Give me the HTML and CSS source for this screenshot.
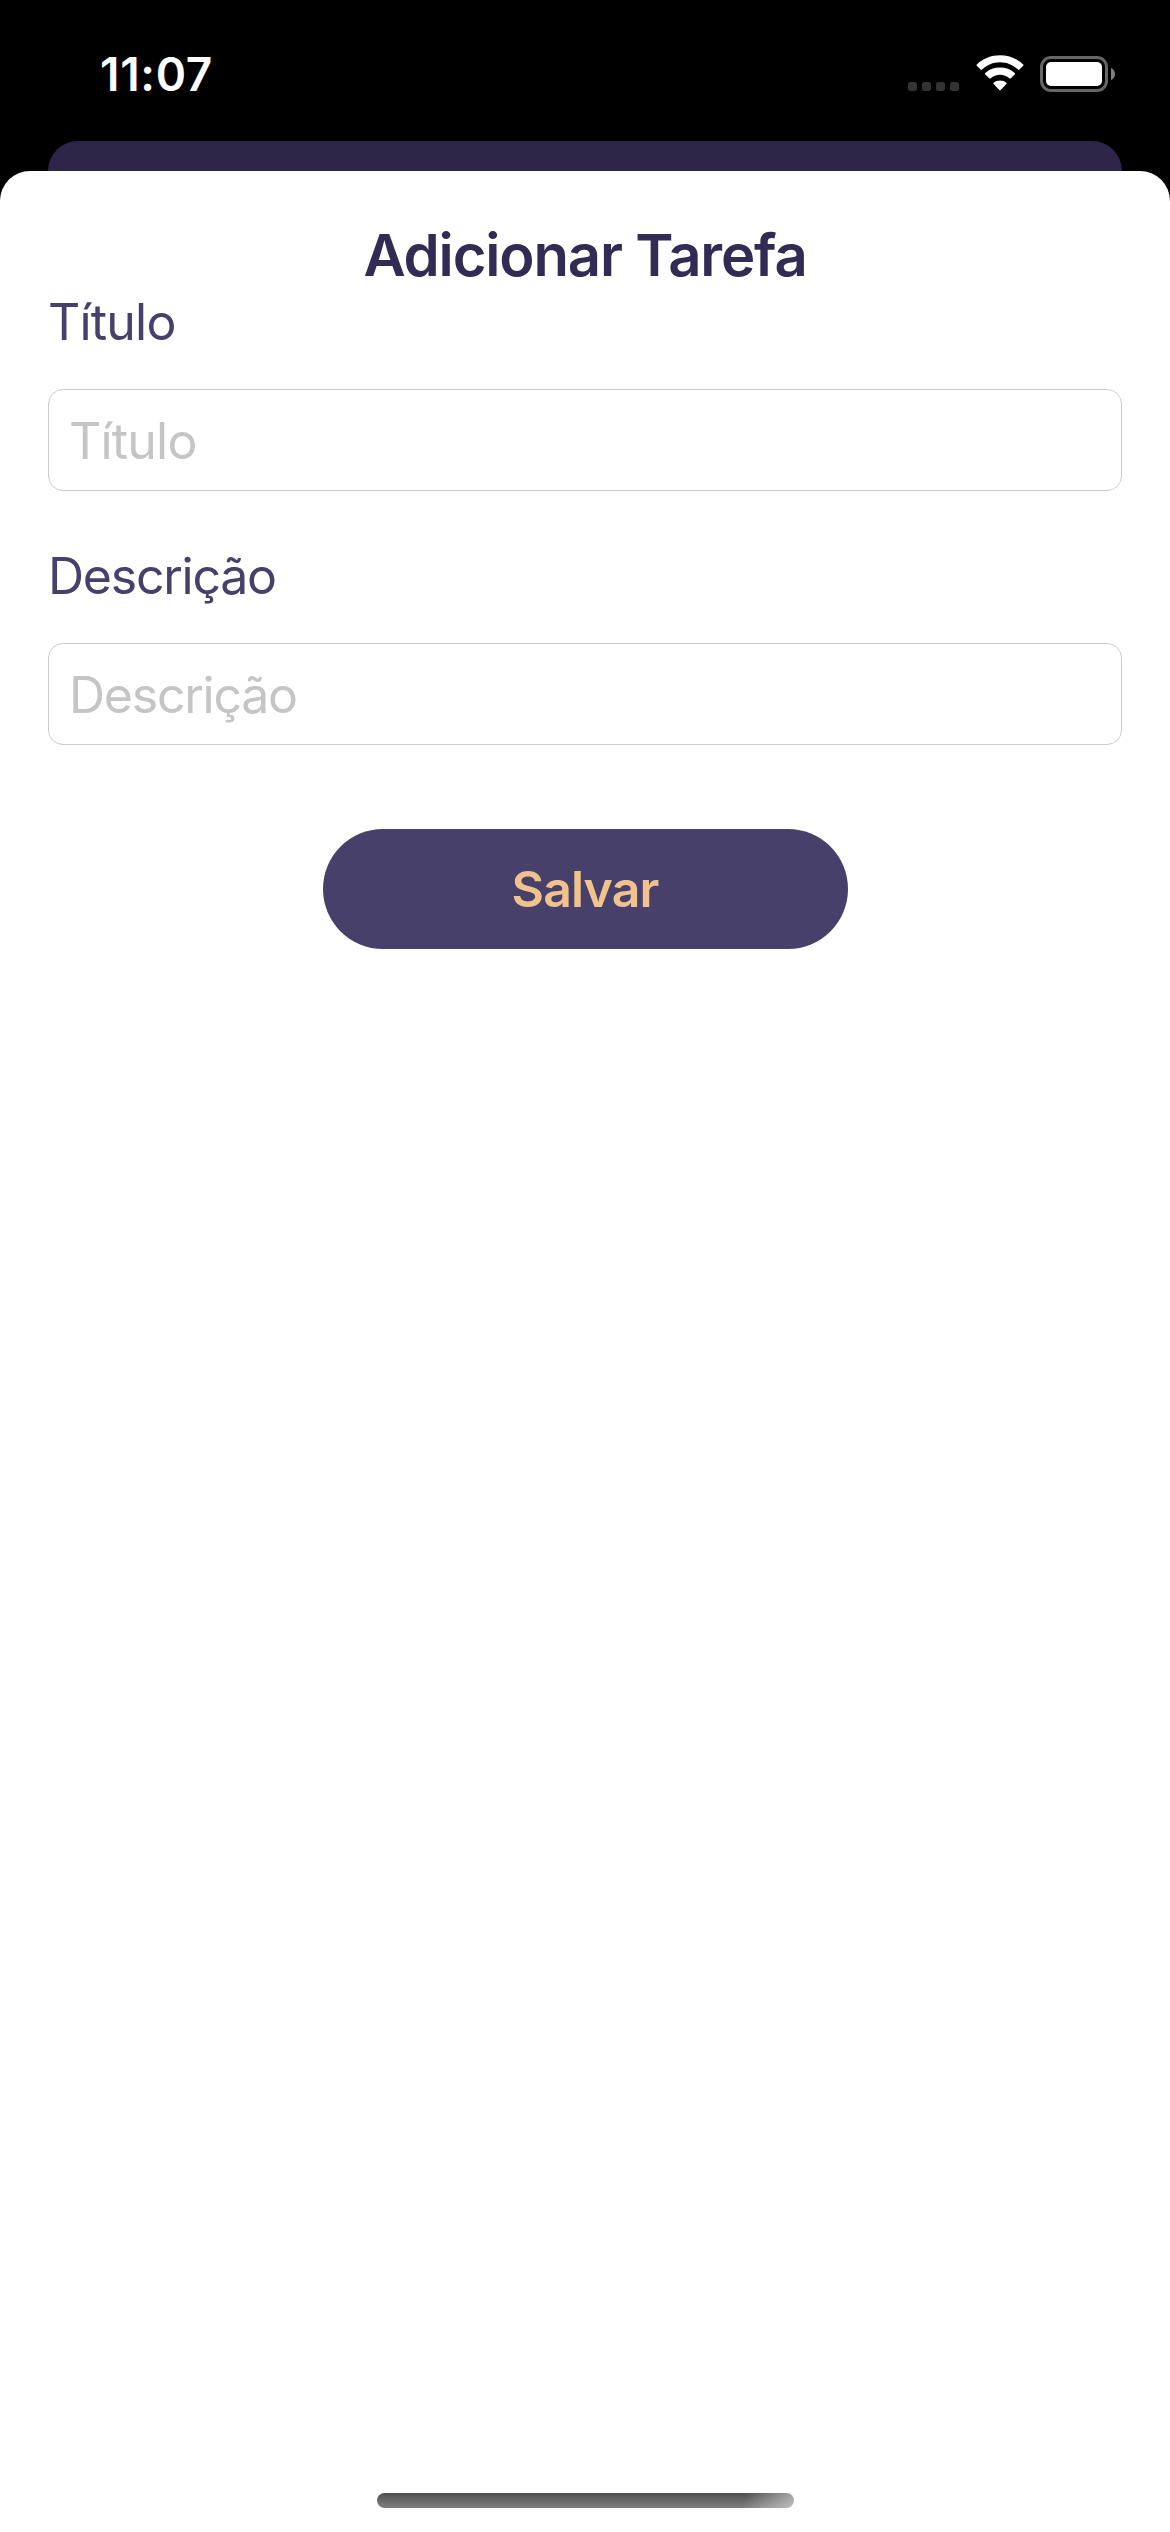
FILE: index.html
```html
<!DOCTYPE html>
<html lang="pt-BR">
<head>
<meta charset="utf-8">
<title>Adicionar Tarefa</title>
<link rel="stylesheet" href="styles.css">
</head>
<body>
<header class="status-bar">
  <span class="time">11:07</span>
  <div class="status-icons">
    <svg class="cellular" width="51" height="9" viewBox="0 0 51 9" fill="#333"><rect width="9" height="9" rx="2.5"/><rect x="14" width="9" height="9" rx="2.5"/><rect x="28" width="9" height="9" rx="2.5"/><rect x="42" width="9" height="9" rx="2.5"/></svg>
    <svg class="wifi" width="50" height="37" viewBox="0 0 50 37" fill="#fff"><path d="M25 7.3C31.8 7.3 38.2 10 43 14.6Q43.700 15.300 44.400 14.600L48.200 10.800Q48.900 10.100 48.200 9.400C42 3.500 33.800 .2 25 .2S8 3.500 1.800 9.400Q1.100 10.100 1.800 10.800L5.600 14.600Q6.300 15.300 7 14.600C11.800 10 18.200 7.300 25 7.300Z"/><path d="M25 19.700C28.500 19.700 31.800 21 34.300 23.300Q35.100 24 35.800 23.300L39.800 19.400Q40.500 18.700 39.700 18C35.700 14.400 30.500 12.600 25 12.600S14.300 14.400 10.300 18Q9.500 18.700 10.200 19.400L14.200 23.300Q14.900 24 15.700 23.300C18.200 21 21.500 19.700 25 19.700Z"/><path d="M31.400 27.700Q32.100 28.400 31.400 29.100L25.600 35.100Q25 35.700 24.400 35.100L18.600 29.100Q17.900 28.400 18.600 27.700C22.300 24.700 27.700 24.700 31.400 27.700Z"/></svg>
    <svg class="battery" width="75" height="36" viewBox="0 0 75 36"><rect x="1.500" y="1.500" width="65" height="33" rx="9.500" fill="none" stroke="#666" stroke-width="3"/><rect x="6" y="6" width="56" height="24" rx="5" fill="#fff"/><path d="M71 12C73.500 13 75 15.300 75 18S73.500 23 71 24Z" fill="#808080"/></svg>
  </div>
</header>
<div class="backdrop"></div>
<main class="sheet">
  <h1 class="title">Adicionar Tarefa</h1>
  <form class="form">
    <label class="label" for="titulo">Título</label>
    <input class="field" id="titulo" type="text" placeholder="Título">
    <label class="label label-long" for="descricao">Descrição</label>
    <input class="field field-long" id="descricao" type="text" placeholder="Descrição">
    <button class="save" type="button">Salvar</button>
  </form>
  <div class="home-indicator"></div>
</main>
</body>
</html>
```
FILE: styles.css
```css
* { box-sizing: border-box; }
body {
  margin: 0;
  height: 2532px;
  display: flex;
  flex-direction: column;
  background: #000;
  font-family: Inter, "Liberation Sans", sans-serif;
}
.status-bar {
  height: 141px;
  display: flex;
  justify-content: space-between;
  align-items: flex-start;
  padding: 0 55px 0 100px;
}
.time {
  margin-top: 44px;
  color: #fff;
  font-size: 46px;
  font-weight: 600;
  line-height: 60px;
  letter-spacing: 0.7px;
}
.status-icons { display: flex; align-items: flex-start; margin-top: 55px; }
.cellular { margin: 27px 16px 0 0; }
.wifi { margin-right: 15px; }
.battery { margin-top: 1px; }
.backdrop {
  height: 30px;
  margin: 0 48px;
  border-radius: 30px 30px 0 0;
  background: #2d2649;
}
.sheet {
  flex: 1;
  display: flex;
  flex-direction: column;
  align-items: center;
  padding: 48px 48px 24px;
  border-radius: 30px 30px 0 0;
  background: #fff;
}
.title {
  margin: 0;
  color: #322b53;
  font-size: 58px;
  font-weight: 600;
  line-height: 72px;
  letter-spacing: -1.15px;
}
.form {
  align-self: stretch;
  display: flex;
  flex-direction: column;
  padding-top: 1px;
}
.label {
  margin: 0 0 37px;
  color: #47406b;
  font-size: 50px;
  line-height: 60px;
  letter-spacing: -0.8px;
}
.field {
  width: 100%;
  height: 102px;
  margin: 0 0 55px;
  padding: 1px 20px 0;
  border: 1px solid #ccc;
  border-radius: 15px;
  background: #fff;
  font: 400 50px/60px Inter, "Liberation Sans", sans-serif;
  letter-spacing: -0.8px;
}
.label-long, .field-long { letter-spacing: -1.25px; }
.field::placeholder { color: #c5c5c7; opacity: 1; }
.save {
  align-self: center;
  width: 525px;
  height: 120px;
  margin-top: 29px;
  padding: 0;
  border: 0;
  border-radius: 60px;
  background: #47406b;
  color: #efc28e;
  font: 600 50px/60px Inter, "Liberation Sans", sans-serif;
  letter-spacing: -0.9px;
}
.home-indicator {
  width: 417px;
  height: 15px;
  margin-top: auto;
  border-radius: 8px;
  background: linear-gradient(100deg, transparent 88%, rgba(255,255,255,.5)), linear-gradient(#505050, #808080);
}
```
